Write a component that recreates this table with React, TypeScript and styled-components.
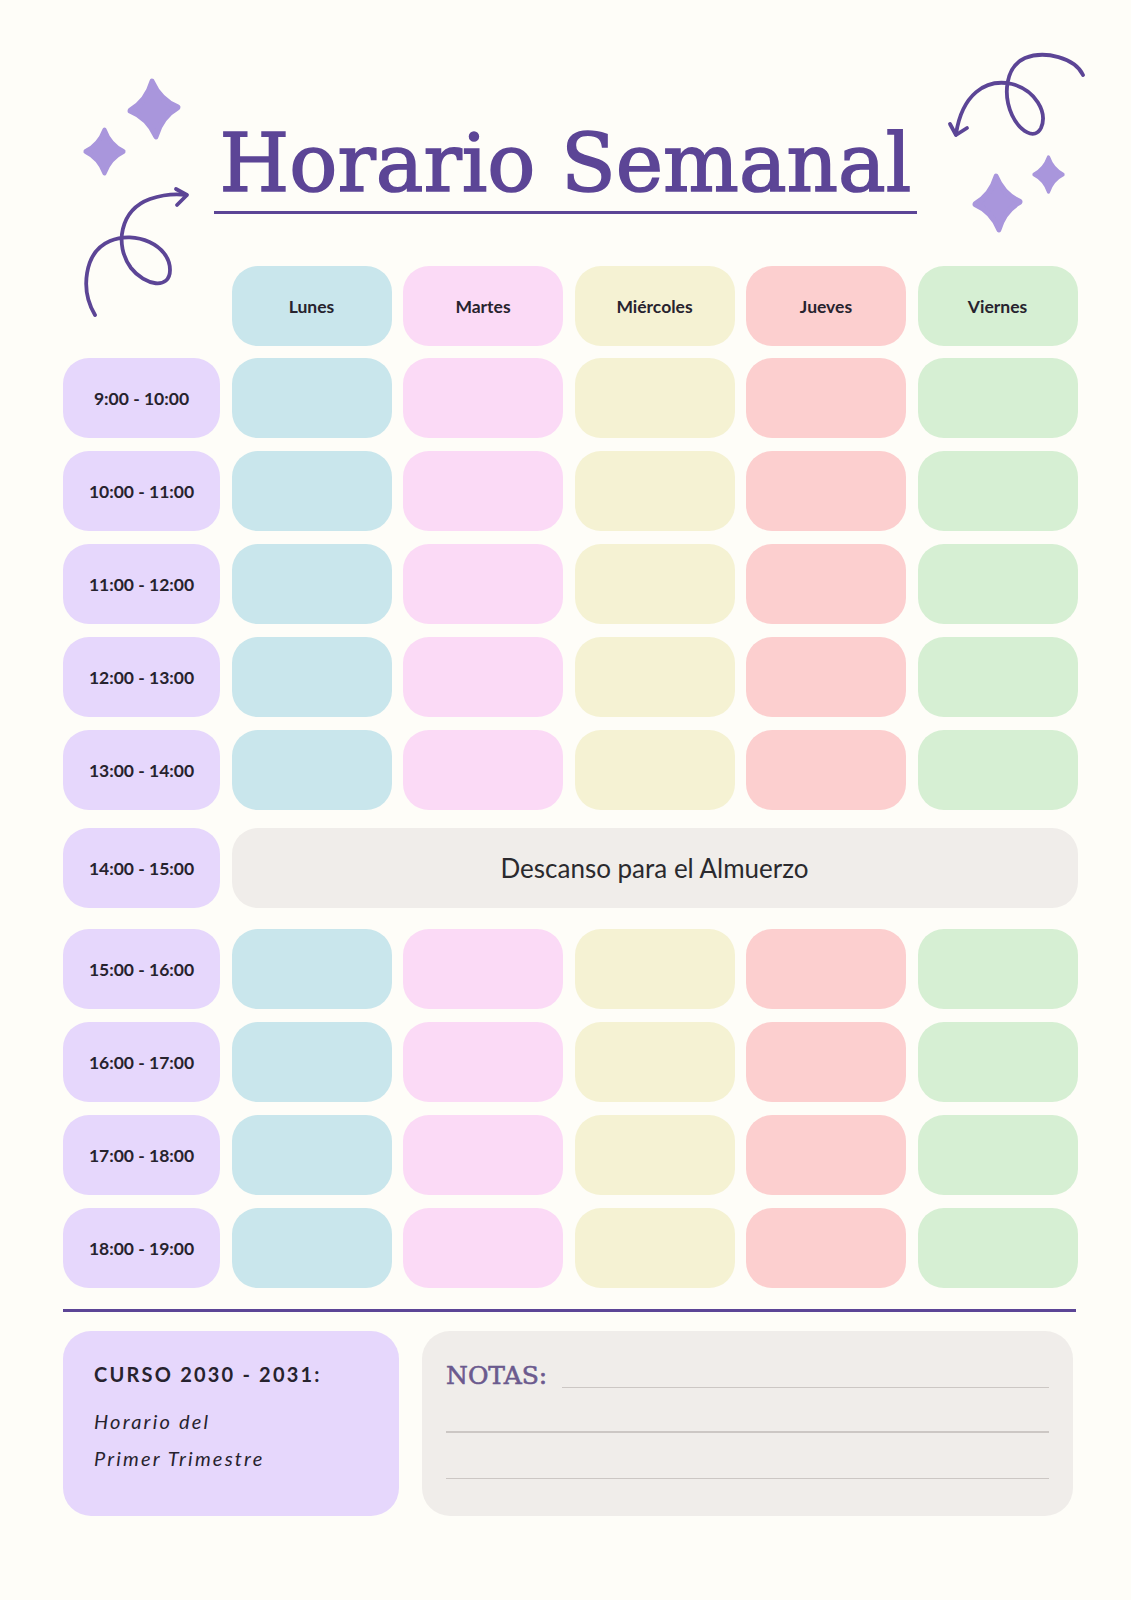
import styled, { createGlobalStyle } from "styled-components";

const colors = {
  page: "#fefdf8",
  ink: "#27232e",
  purple: "#5c4596",
  notes: "#6b5a8e",
  lilac: "#a996dc",
  time: "#e6d7fc",
  lunch: "#f0edea",
  rule: "#ccc7c4",
};

const days = [
  { name: "Lunes", bg: "#c9e6ec" },
  { name: "Martes", bg: "#fbdaf6" },
  { name: "Miércoles", bg: "#f5f2d3" },
  { name: "Jueves", bg: "#fccfcf" },
  { name: "Viernes", bg: "#d6efd3" },
];

const morning = ["9:00 - 10:00", "10:00 - 11:00", "11:00 - 12:00", "12:00 - 13:00", "13:00 - 14:00"];
const afternoon = ["15:00 - 16:00", "16:00 - 17:00", "17:00 - 18:00", "18:00 - 19:00"];

const GlobalStyle = createGlobalStyle`
  * {
    box-sizing: border-box;
  }

  body {
    margin: 0;
    background-color: ${colors.page};
    font-family: Lato, "Noto Sans", sans-serif;
    color: ${colors.ink};
  }
`;

const Sparkle = ({ size, top, left, tilt }: { size: [number, number]; top: number; left: number; tilt: number }) => (
  <SparkleSvg
    viewBox="0 0 100 100"
    preserveAspectRatio="none"
    $top={top}
    $left={left}
    $tilt={tilt}
    style={{ width: size[0], height: size[1] }}
  >
    <path
      d="M50 6 Q63 37 94 50 Q63 63 50 94 Q37 63 6 50 Q37 37 50 6Z"
      fill={colors.lilac}
      stroke={colors.lilac}
      strokeWidth="10"
      strokeLinejoin="round"
    />
  </SparkleSvg>
);

const LeftSwirl = () => (
  <Swirl viewBox="70 180 130 150" $top={180} $left={70} style={{ width: 130, height: 150 }}>
    <path d="M95 315 C80 290 84 252 110 241 C135 230 170 245 170 270 C170 290 145 286 131 268 C114 245 120 210 150 199 C165 194 178 194 186 195" />
    <path d="M176 189 L187 195 L177 205" />
  </Swirl>
);

const RightSwirl = () => (
  <Swirl viewBox="940 45 150 100" $top={45} $left={940} style={{ width: 150, height: 100 }}>
    <path d="M1083 75 C1075 58 1045 50 1025 58 C1005 67 1003 95 1012 115 C1020 132 1035 140 1041 128 C1048 112 1035 90 1012 84 C985 78 962 95 956 134" />
    <path d="M950 124 L956 135 L967 128" />
  </Swirl>
);

const App = () => {
  return (
    <Page>
      <GlobalStyle />
      <Sparkle size={[54, 62]} top={78} left={127} tilt={-4} />
      <Sparkle size={[43, 49]} top={127} left={83} tilt={0} />
      <Sparkle size={[51, 60]} top={173} left={972} tilt={-3} />
      <Sparkle size={[33, 39]} top={155} left={1032} tilt={0} />
      <LeftSwirl />
      <RightSwirl />

      <TitleWrap>
        <Title>Horario Semanal</Title>
      </TitleWrap>

      <Schedule>
        <HeadRow>
          <span />
          {days.map((d) => (
            <Cell key={d.name} $bg={d.bg}>
              {d.name}
            </Cell>
          ))}
        </HeadRow>

        {morning.map((t) => (
          <Row key={t}>
            <Cell $bg={colors.time}>{t}</Cell>
            {days.map((d) => (
              <Cell key={d.name} $bg={d.bg} />
            ))}
          </Row>
        ))}

        <LunchRow>
          <Cell $bg={colors.time}>14:00 - 15:00</Cell>
          <Lunch>Descanso para el Almuerzo</Lunch>
        </LunchRow>

        {afternoon.map((t) => (
          <Row key={t}>
            <Cell $bg={colors.time}>{t}</Cell>
            {days.map((d) => (
              <Cell key={d.name} $bg={d.bg} />
            ))}
          </Row>
        ))}
      </Schedule>

      <Divider />

      <Footer>
        <Info>
          <Course>CURSO 2030 - 2031:</Course>
          <Term>Horario del</Term>
          <Term>Primer Trimestre</Term>
        </Info>

        <Notes>
          <NotesHead>
            <NotesLabel>NOTAS:</NotesLabel>
            <Rule $gap={0} />
          </NotesHead>
          <Rule $gap={43} />
          <Rule $gap={45} />
        </Notes>
      </Footer>
    </Page>
  );
};

export default App;

const Page = styled.div`
  position: relative;
  width: 1131px;
  min-height: 1600px;
  padding: 124px 0 0 63px;
`;

const SparkleSvg = styled.svg<{ $top: number; $left: number; $tilt: number }>`
  position: absolute;
  top: ${(p) => p.$top}px;
  left: ${(p) => p.$left}px;
  transform: rotate(${(p) => p.$tilt}deg);
  overflow: visible;
`;

const Swirl = styled.svg<{ $top: number; $left: number }>`
  position: absolute;
  top: ${(p) => p.$top}px;
  left: ${(p) => p.$left}px;
  overflow: visible;

  path {
    fill: none;
    stroke: ${colors.purple};
    stroke-width: 3.8;
    stroke-linecap: round;
    stroke-linejoin: round;
  }
`;

const TitleWrap = styled.div`
  width: 1005px;
  display: flex;
  justify-content: center;
`;

const Title = styled.h1`
  margin: 0;
  padding: 0 6px 7px;
  border-bottom: 3px solid ${colors.purple};
  font-family: "DejaVu Serif", serif;
  font-weight: 400;
  font-size: 80px;
  line-height: 1;
  color: ${colors.purple};
  -webkit-text-stroke: 1.6px ${colors.purple};
  white-space: nowrap;
`;

const Schedule = styled.div`
  margin-top: 52px;
  display: flex;
  flex-direction: column;
  gap: 13px;
`;

const Row = styled.div`
  display: grid;
  grid-template-columns: 157px repeat(5, 160px);
  column-gap: 11.5px;
`;

const HeadRow = styled(Row)`
  margin-bottom: -1px;
`;

const LunchRow = styled(Row)`
  margin: 5px 0 8px;
`;

const Cell = styled.div<{ $bg: string }>`
  height: 80px;
  border-radius: 26px;
  background-color: ${(p) => p.$bg};
  display: flex;
  align-items: center;
  justify-content: center;
  font-size: 17.5px;
  font-weight: 700;
  color: ${colors.ink};
`;

const Lunch = styled.div`
  grid-column: 2 / -1;
  height: 80px;
  border-radius: 26px;
  background-color: ${colors.lunch};
  display: flex;
  align-items: center;
  justify-content: center;
  font-size: 26px;
  color: #2a2a2e;
`;

const Divider = styled.div`
  margin-top: 21px;
  width: 1013px;
  height: 3px;
  background-color: ${colors.purple};
`;

const Footer = styled.div`
  margin-top: 19px;
  display: flex;
  gap: 23px;
`;

const Info = styled.div`
  width: 336px;
  height: 185px;
  border-radius: 28px;
  background-color: ${colors.time};
  padding: 33px 31px;
`;

const Course = styled.div`
  font-size: 20px;
  font-weight: 700;
  line-height: 1;
  letter-spacing: 2.2px;
  margin-bottom: 19px;
`;

const Term = styled.div`
  font-size: 20px;
  font-style: italic;
  line-height: 37px;
  letter-spacing: 2.2px;
`;

const Notes = styled.div`
  width: 651px;
  height: 185px;
  border-radius: 28px;
  background-color: ${colors.lunch};
  padding: 32px 24px 0;
`;

const NotesHead = styled.div`
  display: flex;
  align-items: flex-end;
  gap: 15px;
`;

const NotesLabel = styled.span`
  font-family: "DejaVu Serif", serif;
  font-size: 25px;
  line-height: 1;
  color: ${colors.notes};
  -webkit-text-stroke: 0.6px ${colors.notes};
`;

const Rule = styled.div<{ $gap: number }>`
  flex: 1;
  margin-top: ${(p) => p.$gap}px;
  height: 1.5px;
  background-color: ${colors.rule};
`;
